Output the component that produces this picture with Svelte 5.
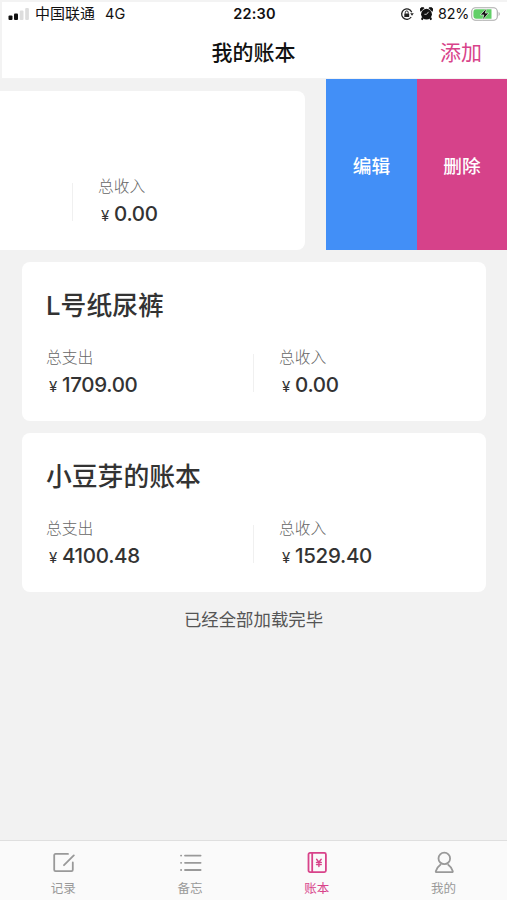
<script>
  const books = [
    { name: '', out: '', income: '0.00', open: true },
    { name: 'L号纸尿裤', out: '1709.00', income: '0.00', open: false },
    { name: '小豆芽的账本', out: '4100.48', income: '1529.40', open: false }
  ];
  const tabs = [
    { id: 'record', label: '记录' },
    { id: 'memo', label: '备忘' },
    { id: 'book', label: '账本' },
    { id: 'me', label: '我的' }
  ];
  const active = 'book';
</script>

<div class="screen">
  <header>
    <div class="status">
      <div class="left">
        <svg class="signal" width="22" height="14" viewBox="0 0 22 14">
          <rect x="0.5" y="8.5" width="4" height="4.5" rx="1" fill="#111" />
          <rect x="6" y="6.5" width="4" height="6.5" rx="1" fill="#111" />
          <rect x="11.8" y="3.5" width="3.7" height="9.5" rx="1" fill="#ddd" />
          <rect x="17.2" y="1" width="3.7" height="12" rx="1" fill="#ddd" />
        </svg>
        <span class="carrier">中国联通</span>
        <span class="net">4G</span>
      </div>
      <div class="time">22:30</div>
      <div class="right">
        <svg width="14" height="14" viewBox="0 0 14 14" fill="none" stroke="#222">
          <path d="M11.7 5.2A5.2 5.2 0 1 0 11.2 10" stroke-width="1.3" />
          <path d="M10.2 6.2h3.6l-1.8 2.6z" fill="#222" stroke="none" />
          <rect x="4.3" y="6.4" width="4.9" height="3.7" rx=".4" fill="#222" stroke="none" />
          <path d="M5.3 6.6V5.4a1.45 1.45 0 0 1 2.9 0v1.2" stroke-width="1" />
        </svg>
        <svg class="alarm" width="13" height="14" viewBox="0 0 13 14">
          <path d="M.8 4.4A2.3 2.3 0 0 1 4.2 1zM12.2 4.4A2.3 2.3 0 0 0 8.8 1z" fill="#111" stroke="#111" stroke-width=".6" />
          <circle cx="6.5" cy="7.2" r="5.4" fill="#111" />
          <path d="M2.9 10.5 1.8 12.8M10.1 10.5 11.2 12.8" stroke="#111" stroke-width="2" />
          <path d="M8.6 4.8 6.5 7.3H4.4" stroke="#ddd" stroke-width=".9" fill="none" />
        </svg>
        <span class="pct">82%</span>
        <svg class="battery" width="30" height="16" viewBox="0 0 30 16">
          <rect x=".7" y="1.8" width="25.6" height="12.4" rx="3.8" fill="#fff" stroke="#aaa" stroke-width="1.1" />
          <path d="M4.8 3.3H20.5v9.4H4.8a2.4 2.4 0 0 1-2.4-2.4V5.7a2.4 2.4 0 0 1 2.4-2.4z" fill="#62cf68" />
          <path d="M27.6 5.8q2.4 2.2 0 4.4z" fill="#aaa" />
          <path d="M15.6 2.2 9.3 8.9h3.5l-1.3 5.2 6.2-7h-3.4z" fill="#111" stroke="#fff" stroke-width=".6" />
        </svg>
      </div>
    </div>
    <div class="nav">
      <h1>我的账本</h1>
      <button class="add">添加</button>
    </div>
  </header>

  <main>
    {#each books as book}
      <section class="row" class:open={book.open}>
        <div class="slide">
          <article class="card">
            <h2>{book.name}</h2>
            <div class="sums">
              <div class="sum">
                {#if book.out}
                  <div class="label">总支出</div>
                  <div class="value"><i>¥</i>{book.out}</div>
                {/if}
              </div>
              <div class="sum second">
                <div class="label">总收入</div>
                <div class="value"><i>¥</i>{book.income}</div>
              </div>
            </div>
          </article>
        </div>
        {#if book.open}
          <div class="actions">
            <button class="edit">编辑</button>
            <button class="delete">删除</button>
          </div>
        {/if}
      </section>
    {/each}
    <p class="end">已经全部加载完毕</p>
  </main>

  <footer>
    {#each tabs as tab}
      <div class="tab" class:active={tab.id === active}>
        <svg width="24" height="24" viewBox="0 0 24 24" fill="none" stroke="currentColor" stroke-width="1.8" stroke-linecap="round" stroke-linejoin="round">
          {#if tab.id === 'record'}
            <path d="M17 2.9H4.5a1.3 1.3 0 0 0-1.3 1.3v14.6a1.3 1.3 0 0 0 1.3 1.3h16a1.3 1.3 0 0 0 1.3-1.3V11.4M22.8 4.4 13 14.2" />
          {:else if tab.id === 'memo'}
            <path d="M7 4.6H22.6M7 11.8H22.6M7 19H22.6M3 4.6h.2M3 11.8h.2M3 19h.2" />
          {:else if tab.id === 'book'}
            <rect x="3.5" y="1.9" width="17.4" height="19.2" rx="1.5" />
            <path d="M7.2 2v19" />
            <path d="m11.6 8.3 2.3 3 2.3-3M13.9 11.3v4.3M11.5 11.5h4.8M11.5 13.6h4.8" stroke-width="1.4" />
          {:else}
            <circle cx="12.3" cy="7.4" r="5.8" />
            <path d="M8.4 13.8C6.4 15.2 4.7 17.4 3.8 20.3q-.2.8.7.8h15.6q.9 0 .7-.8C19.9 17.4 18.2 15.2 16.2 13.8" />
          {/if}
        </svg>
        <span>{tab.label}</span>
      </div>
    {/each}
  </footer>
</div>

<style>
  :global(body) { background: #f2f2f2; }
  .screen {
    display: flex; flex-direction: column;
    width: 507px; height: 900px; overflow: hidden;
    background: #f2f2f2; color: #333;
    font-family: Inter, "Noto Sans CJK SC", sans-serif;
  }
  h1, h2, p { margin: 0; font-weight: 500; }
  button { border: 0; padding: 0; background: none; font: inherit; }
  header {
    box-sizing: border-box; height: 79px; flex: none;
    background: #fff; color: #111;
    border: 2px solid #f3f3f3; border-width: 2px 0 1px 2px;
  }
  .status {
    display: grid; grid-template-columns: 1fr auto 1fr; align-items: center;
    height: 24px; padding: 0 6px 0 6px; font-size: 14px; line-height: 24px;
  }
  .left, .right { display: flex; align-items: center; }
  .right { justify-content: flex-end; }
  .carrier { margin-left: 5px; font-size: 15px; }
  .net { margin-left: 10px; font-size: 14.5px; }
  .time { font-weight: 600; font-size: 14.5px; letter-spacing: .2px; }
  .alarm { margin-left: 6px; }
  .pct { margin-left: 5px; font-size: 14.3px; letter-spacing: -.2px; }
  .battery { margin-left: 2px; }
  .nav {
    display: grid; grid-template-columns: 1fr auto 1fr; align-items: center;
    height: 52px; padding: 1px 25px 0 23px; box-sizing: border-box;
  }
  h1 { grid-column: 2; font-size: 21px; line-height: 52px; }
  .add { justify-self: end; color: #d8438a; font-size: 21px; line-height: 52px; }
  .row { display: flex; justify-content: flex-start; height: 171px; overflow: hidden; }
  .slide { flex: none; box-sizing: border-box; width: 507px; padding: 12px 21px 0 22px; }
  .open .slide { margin-left: -181px; }
  .card {
    box-sizing: border-box; height: 159px; padding: 26px 0 0 24px;
    background: #fff; border-radius: 8px;
  }
  h2 { height: 36px; font-size: 25.8px; line-height: 36px; }
  .sums { display: flex; margin-top: 22px; }
  .sum { width: 208px; }
  .second { position: relative; padding-left: 26px; }
  .second::before {
    content: ""; position: absolute; left: 0; top: 8px; width: 1px; height: 38px; background: #f0f0f0;
  }
  .label { font-size: 15.8px; line-height: 24px; color: #666; font-weight: 300; }
  .value {
    display: flex; align-items: baseline; padding-left: 3px;
    font-size: 20.5px; line-height: 30px; font-weight: 500; letter-spacing: -.3px;
  }
  .value i { width: 13px; font-size: 15px; font-style: normal; font-weight: 400; }
  .actions { display: flex; flex: none; width: 181px; color: #fff; font-size: 18.7px; font-weight: 500; }
  .actions button { width: 91px; padding-bottom: 1px; }
  .actions .delete { width: 90px; }
  .edit { background: #428ff7; color: #fff; }
  .delete { background: #d6428a; color: #fff; }
  main { flex: 1; }
  .end { margin-top: 14px; text-align: center; font-size: 17.4px; line-height: 28px; font-weight: 400; color: #555; }
  footer {
    display: flex; box-sizing: border-box; height: 60px; flex: none;
    border-top: 1px solid #dfdfdf; background: #fafafa;
  }
  .tab {
    flex: 1; display: flex; flex-direction: column; align-items: center;
    padding-top: 10px; color: #999; font-size: 12.5px; line-height: 18px;
  }
  .tab span { margin-top: 5px; }
  .active { color: #d8438a; }
</style>
